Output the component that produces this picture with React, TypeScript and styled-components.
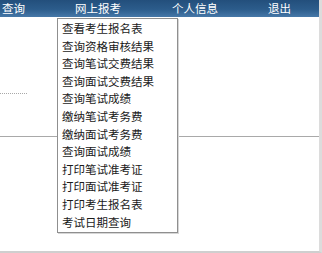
import styled, { createGlobalStyle } from "styled-components";

// 페이지 기본 스타일
const GlobalStyle = createGlobalStyle`
  html, body {
    margin: 0;
    padding: 0;
    background: #ffffff;
    overflow: hidden;
  }
  body {
    font-family: "Noto Sans CJK SC", "Noto Sans", sans-serif;
  }
`;

const Page = styled.div`
  position: relative;
  width: 319px;
  height: 251px;
  background: #ffffff;
  border-right: 3px solid #dcdcdc;
  border-bottom: 2px solid #cfcfcf;
`;

// 상단 메뉴 바
const NavBar = styled.div`
  height: 17px;
  display: flex;
  align-items: center;
  padding-left: 2px;
  background: linear-gradient(to bottom, #234f7c 0%, #2c5c8b 55%, #4678a8 100%);
`;

const NavItem = styled.div<{ $width: number }>`
  position: relative;
  width: ${({ $width }) => $width}px;
  height: 17px;
  line-height: 17px;
  font-size: 11.5px;
  color: #ffffff;
  white-space: nowrap;
`;

// 드롭다운 메뉴
const Dropdown = styled.ul`
  position: absolute;
  top: 18px;
  left: -18px;
  z-index: 2;
  width: 115px;
  margin: 0;
  padding: 1px 0 1px 4px;
  list-style: none;
  background: #ffffff;
  border: 1px solid #8f8f8f;
  box-shadow: 1px 1px 0 #d6d6d6;
`;

const DropItem = styled.li`
  height: 17.6px;
  line-height: 17.6px;
  font-size: 11.5px;
  color: #1a1a1a;
  white-space: nowrap;
`;

// 본문
const Content = styled.div`
  padding-top: 76px;
`;

const DottedRule = styled.div`
  width: 27px;
  border-top: 1px dotted #a8a8a8;
`;

const SolidRule = styled.div`
  margin-top: 42px;
  border-top: 1px solid #a9a9a9;
`;

const menuItems = [
  "查看考生报名表",
  "查询资格审核结果",
  "查询笔试交费结果",
  "查询面试交费结果",
  "查询笔试成绩",
  "缴纳笔试考务费",
  "缴纳面试考务费",
  "查询面试成绩",
  "打印笔试准考证",
  "打印面试准考证",
  "打印考生报名表",
  "考试日期查询",
];

const App = () => {
  return (
    <>
      <GlobalStyle />
      <Page>
        <NavBar>
          <NavItem $width={73}>查询</NavItem>
          <NavItem $width={97}>
            网上报考
            <Dropdown>
              {menuItems.map((item) => (
                <DropItem key={item}>{item}</DropItem>
              ))}
            </Dropdown>
          </NavItem>
          <NavItem $width={96}>个人信息</NavItem>
          <NavItem $width={40}>退出</NavItem>
        </NavBar>
        <Content>
          <DottedRule />
          <SolidRule />
        </Content>
      </Page>
    </>
  );
};

export default App;
